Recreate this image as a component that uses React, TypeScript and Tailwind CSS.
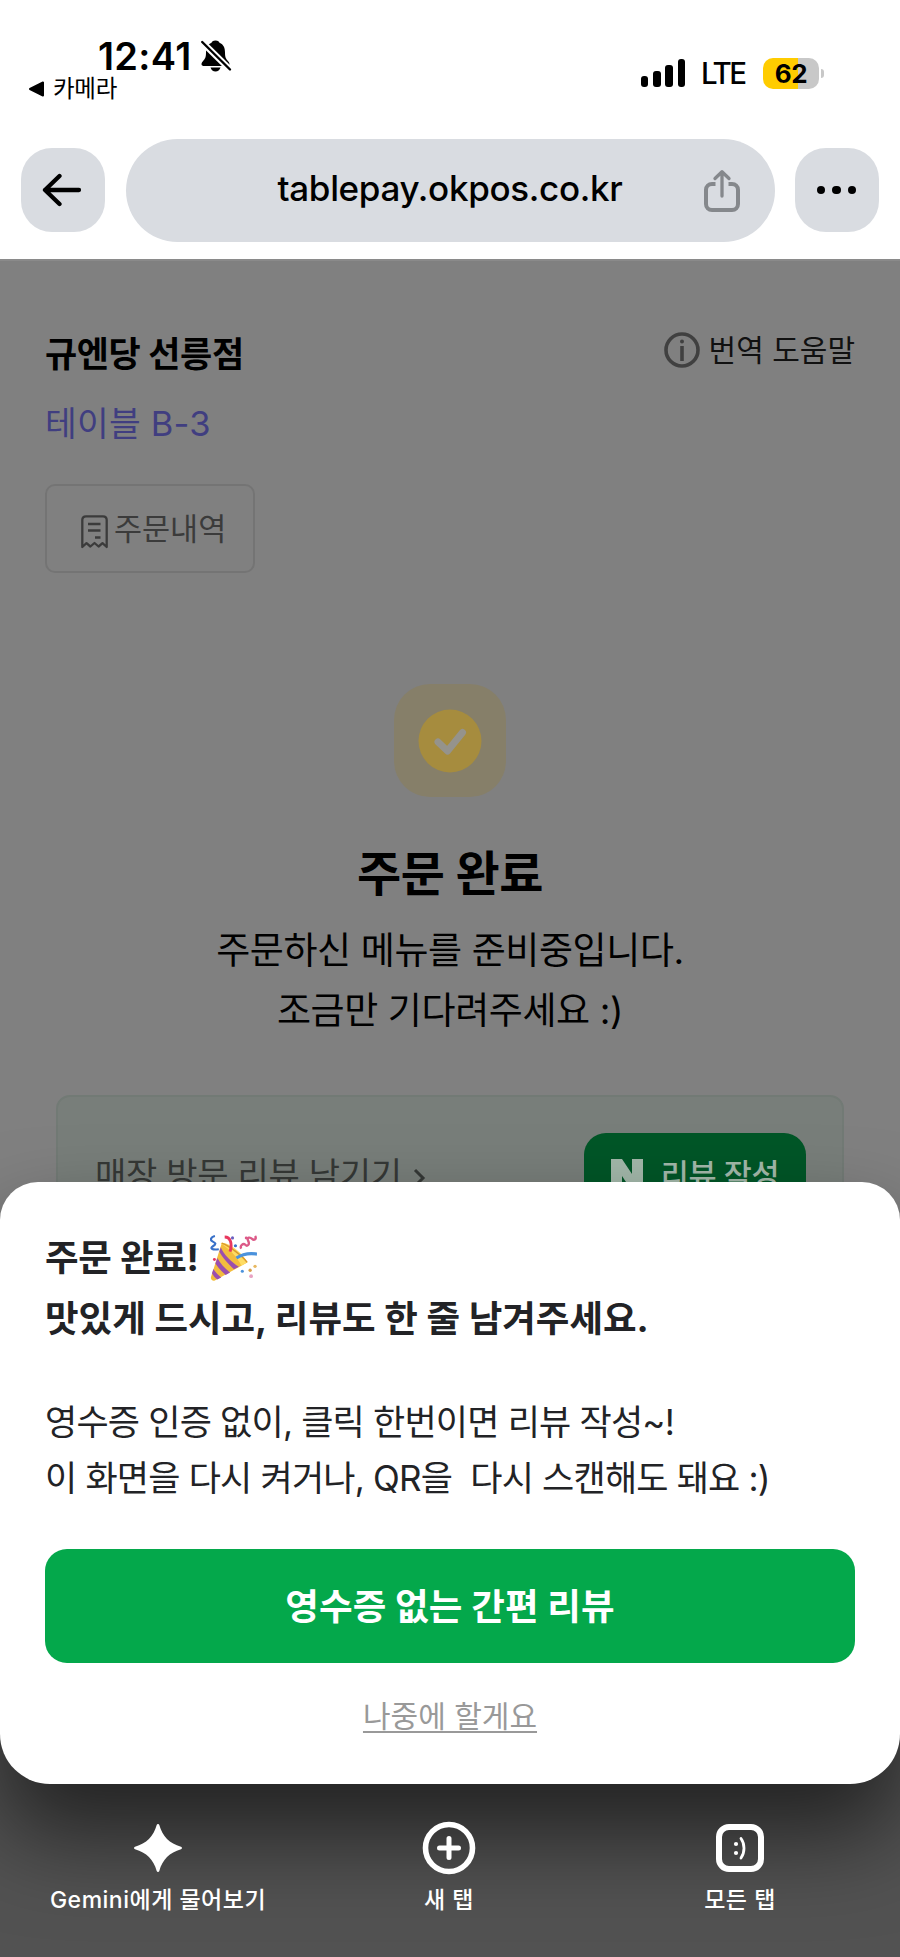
import type { ReactNode } from 'react';

function MutedBell() {
  return (
    <svg width="32" height="34" viewBox="0 0 32 34">
      <path d="M15.500 1.500c-2.700 0-3.600 1.200-4 2.300C7.400 5.500 6 9 6 13.500c0 5-1 6.500-3.300 9C.7 24.800 1.300 27 4 27h23c2.700 0 3.300-2.200 1.300-4.500C26 20 25 18.500 25 13.500c0-4.500-1.400-8-5.500-9.700-.4-1.100-1.300-2.300-4-2.300z" />
      <path d="M10.500 28.500h10c-.8 2.600-2.600 3.900-5 3.900s-4.200-1.300-5-3.900z" />
      <path d="M2.500 3.500L30 30.500" stroke="#fff" strokeWidth="6.500" />
      <path d="M2.200 3L30 30.500" stroke="#000" strokeWidth="2.400" strokeLinecap="round" />
    </svg>
  );
}

function StatusBar() {
  return (
    <div className="h-[139px] flex justify-between items-start">
      <div className="pt-[33px]">
        <div className="flex items-center pl-[98px] h-[46px]">
          <span className="text-[38px] leading-[46px] font-semibold tracking-[0.300px]">12:41</span>
          <span className="ml-[8px]">
            <MutedBell />
          </span>
        </div>
        <div className="flex items-center pl-[28px] h-[20px]">
          <svg width="17" height="16" viewBox="0 0 17 16">
            <path d="M2 8L15 1.500v13z" stroke="#000" strokeWidth="2" strokeLinejoin="round" />
          </svg>
          <span className="ml-[8px] text-[23.500px] leading-[24px] tracking-[-0.3px]">카메라</span>
        </div>
      </div>
      <div className="flex items-center pt-[57px] pr-[76px]">
        <div className="flex items-end gap-[4.700px] h-[28px] pt-px">
          <span className="w-[7.500px] h-[11px] rounded-[3px] bg-black" />
          <span className="w-[7.500px] h-[16px] rounded-[3px] bg-black" />
          <span className="w-[7.500px] h-[22px] rounded-[3px] bg-black" />
          <span className="w-[7.500px] h-[28px] rounded-[3px] bg-black" />
        </div>
        <span className="ml-[16px] w-[62px] text-[29.500px] leading-[32px] font-medium tracking-[-2.400px]">LTE</span>
        <div className="w-[56px] h-[31px] rounded-[10px] bg-[linear-gradient(90deg,#fc0_63%,#c8c8c8_63%)] flex items-center justify-center">
          <span className="text-[26px] leading-[31px] font-bold tracking-[-0.3px]">62</span>
        </div>
        <span className="ml-[2px] w-[3px] h-[9px] rounded-r-full bg-[#c8c8c8]" />
      </div>
    </div>
  );
}

function AddressBar() {
  return (
    <div className="h-[120px] flex items-start justify-between px-[21px]">
      <button className="mt-[9px] w-[84px] h-[84px] rounded-[31px] bg-[#d9dce1] flex items-center justify-center pr-[2px]">
        <svg width="40" height="34" viewBox="0 0 40 34" fill="none" stroke="#000" strokeWidth="4.300" strokeLinecap="round" strokeLinejoin="round">
          <path d="M37 17H3M17.500 3L3 17l14.500 14" />
        </svg>
      </button>
      <div className="w-[649px] h-[103px] rounded-full bg-[#d9dce1] flex items-center justify-end pr-[34px]">
        <span className="text-[35px] leading-[44px] pb-[6px] mr-[80px] font-medium tracking-[-0.330px]">tablepay.okpos.co.kr</span>
        <svg width="38" height="44" viewBox="0 0 38 44" fill="none" stroke="#85888c" strokeWidth="4" strokeLinecap="round" strokeLinejoin="round">
          <path d="M12.500 15H9c-3.500 0-6 2.300-6 5.800V35c0 3.600 2.500 6 6 6h20c3.500 0 6-2.400 6-6V20.800c0-3.500-2.500-5.800-6-5.800h-3.500" strokeLinecap="butt" />
          <path d="M19 27V3M12 9.500L19 2.700l7 6.800" strokeWidth="3.300" />
        </svg>
      </div>
      <button className="mt-[9px] w-[84px] h-[84px] rounded-[31px] bg-[#d9dce1] flex items-center justify-center gap-[7px] pr-px">
        <span className="w-[8.500px] h-[8.500px] rounded-full bg-black" />
        <span className="w-[8.500px] h-[8.500px] rounded-full bg-black" />
        <span className="w-[8.500px] h-[8.500px] rounded-full bg-black" />
      </button>
    </div>
  );
}

function ReceiptIcon() {
  return (
    <svg width="27" height="34" viewBox="0 0 27 34" fill="none" stroke="#3b3b3b" strokeWidth="2.300">
      <path d="M1.300 32V5c0-2.400 1.300-3.700 3.700-3.700h17c2.400 0 3.700 1.300 3.700 3.700v27l-4.200-3.800-3.900 3.300-4.100-3.500-4.100 3.500-3.900-3.300z" strokeLinejoin="round" />
      <path d="M7 9h12.500M7 15.500h12.500M14 22.500h5.500" />
    </svg>
  );
}

function OrderPage() {
  return (
    <main className="h-[1341px] bg-[#808080] border-t-2 border-[#8a8a8a] px-[45px]">
      <div className="flex justify-between pt-[67px]">
        <div>
          <h1 className="text-[35px] leading-[52px] font-bold tracking-[-0.400px]">규엔당 선릉점</h1>
          <p className="mt-[18px] text-[34.500px] leading-[52px] tracking-[0.200px] text-[#403e80]">테이블 B-3</p>
        </div>
        <div className="flex items-center h-[44px] text-[#111]">
          <svg className="mb-px" width="36" height="36" viewBox="0 0 36 36" fill="none" stroke="#404040" strokeWidth="3.600">
            <circle cx="18" cy="18" r="16" />
            <path d="M18 14v15" />
            <circle cx="18" cy="9.500" r="2" fill="#404040" stroke="none" />
          </svg>
          <span className="ml-[9px] text-[30px] leading-[44px]">번역 도움말</span>
        </div>
      </div>
      <button className="mt-[34px] w-[210px] h-[89px] rounded-[10px] border-2 border-[#747474] flex items-center pl-[34px] text-[#3b3b3b]">
        <span className="mt-[6px]">
          <ReceiptIcon />
        </span>
        <span className="ml-[6px] pt-px text-[30.500px] leading-[44px]">주문내역</span>
      </button>

      <section className="flex flex-col items-center text-center pt-[111px]">
        <div className="w-[112px] h-[113px] rounded-[36px] bg-[#867f69] flex items-center justify-center">
          <svg width="64" height="64" viewBox="0 0 64 64" fill="none">
            <circle cx="32" cy="32" r="31.500" fill="#a68c3e" />
            <path d="M20 33l9.500 9L44.500 23.500" stroke="#95938c" strokeWidth="7" strokeLinecap="round" strokeLinejoin="round" />
          </svg>
        </div>
        <h2 className="mt-[41px] text-[48px] leading-[72px] font-bold tracking-[-0.400px]">주문 완료</h2>
        <p className="mt-[11px] text-[37px] leading-[60px] tracking-[-0.400px]">
          주문하신 메뉴를 준비중입니다.
          <br />
          조금만 기다려주세요 :)
        </p>
      </section>

      <section className="mt-[54px] mx-[11px] h-[160px] rounded-[14px] border-2 border-[#727a75] bg-[#787e7a] flex items-center justify-between pl-[37px] pr-[36px]">
        <div className="flex items-center text-[#353836]">
          <span className="text-[34px] leading-[48px] tracking-[-0.300px]">매장 방문 리뷰 남기기</span>
          <svg className="ml-[11px] mt-[6px]" width="13" height="20" viewBox="0 0 13 20" fill="none" stroke="#353836" strokeWidth="3">
            <path d="M2 2l8 8-8 8" />
          </svg>
        </div>
        <button className="w-[222px] h-[84px] rounded-[22px] bg-[#005627] flex items-center justify-center text-[#a3b8aa]">
          <svg width="32" height="32" viewBox="0 0 32 32" fill="#a3b8aa">
            <path d="M0 0h11l10 15V0h11v32H21L11 17v15H0z" />
          </svg>
          <span className="ml-[18px] text-[30.500px] leading-[44px] font-medium tracking-[-0.400px]">리뷰 작성</span>
        </button>
      </section>
    </main>
  );
}

function PartyPopper() {
  return (
    <svg width="47" height="47" viewBox="0 0 48 48" fill="none">
      <path d="M12 8.500C20 10 35 22 38 28L5 46.500c-2.500 1-4.500-1-4-3.500z" fill="#f3bd3d" />
      <path d="M11 9c7 3 18 15 21 22.500l6-3.300C35 20 20 7.500 12 8z" fill="#ffdc63" />
      <path d="M9.500 17c3 5.500 9 12 15 18l5-2.700C22 28 14 20 11 12.500zM5.500 29c3 4.500 6.500 8.500 10.500 11.800l4.500-2.500C15 34 10.500 29 7.500 23.500zM2 39c1.300 2.500 3.300 5 5.500 6.500l4-2.200c-3-2.300-6-5.300-8-8.500z" fill="#9b4fae" />
      <path d="M12 8.500C18 10 33 21 38 28" stroke="#d99a2c" strokeWidth="1.500" />
      <path d="M15 2c6 0 8 7 5.500 15" stroke="#e8385e" strokeWidth="3" />
      <path d="M5 1C1 2-.5 5 2.500 6.500S7 9 3 11.500s0 4 6 3" stroke="#3971c9" strokeWidth="2.200" />
      <path d="M32 14c-2-3 2-6 4-4s5 0 3-4 2-4 4-2 5 0 3-3" stroke="#dc5a88" strokeWidth="2.400" />
      <path d="M27 23.500c6-4 12-5.500 21-4" stroke="#4b92dc" strokeWidth="3.300" />
      <circle cx="23" cy="3" r="1.600" fill="#6a5fc0" />
      <circle cx="26" cy="11" r="1.600" fill="#3971c9" />
      <circle cx="37" cy="3" r="1.500" fill="#dc5a88" />
      <circle cx="4.500" cy="25" r="1.500" fill="#e8385e" />
      <circle cx="33" cy="37" r="1.600" fill="#4b92dc" />
      <circle cx="41" cy="36" r="1.700" fill="#d8a04a" />
      <circle cx="46" cy="32" r="1.700" fill="#e8b860" />
      <circle cx="42" cy="42" r="1.900" fill="#e8a2c2" />
    </svg>
  );
}

function ReviewSheet() {
  return (
    <div className="absolute inset-x-0 top-[1182px] h-[602px] rounded-t-[38px] rounded-b-[50px] bg-white px-[45px] pt-[46px] text-[#222326] shadow-[0_50px_90px_rgba(0,0,0,0.58)]">
      <div className="text-[36.500px] leading-[61px] font-bold">
        <div className="flex items-center tracking-[-0.300px]">
          주문 완료!
          <span className="ml-[11px]">
            <PartyPopper />
          </span>
        </div>
        <div>맛있게 드시고, 리뷰도 한 줄 남겨주세요.</div>
      </div>
      <p className="mt-[44px] text-[35px] leading-[56px] tracking-[-0.800px] whitespace-pre">
        {'영수증 인증 없이, 클릭 한번이면 리뷰 작성~!\n이 화면을 다시 켜거나, QR을  다시 스캔해도 돼요 :)'}
      </p>
      <button className="mt-[43px] w-full h-[114px] rounded-[22px] bg-[#04a84b] text-white text-[36.500px] font-bold tracking-[0.100px] flex items-center justify-center pt-[2px]">
        영수증 없는 간편 리뷰
      </button>
      <div className="mt-[31px] flex justify-center">
        <button className="text-[30px] leading-[44px] text-[#999] underline underline-offset-[4px] decoration-2 [text-decoration-skip-ink:none]">
          나중에 할게요
        </button>
      </div>
    </div>
  );
}

function Tab({ label, children }: { label: string; children: ReactNode }) {
  return (
    <button className="w-[291px] flex flex-col items-center">
      <span className="h-[54px] flex items-center">{children}</span>
      <span className="mt-[9px] text-[23px] leading-[32px] font-medium tracking-[0.500px]">{label}</span>
    </button>
  );
}

// The tabs stay above the sheet's shadow, the bar's background below it
function BottomBar() {
  return (
    <nav className="flex-1 bg-[#525252] text-white pt-[221px]">
      <div className="relative z-10 flex justify-center items-start pr-[2px]">
        <Tab label="Gemini에게 물어보기">
          <svg width="50" height="50" viewBox="0 0 50 50" fill="#fff">
            <path d="M25 1c.7 0 1.100.4 1.300 1C29.500 13.500 36.500 20.500 48 23.700c1.300.5 1.300 2.100 0 2.600C36.500 29.500 29.500 36.500 26.300 48c-.5 1.300-2.100 1.300-2.600 0C20.500 36.500 13.500 29.500 2 26.300c-1.300-.5-1.300-2.100 0-2.600C13.500 20.500 20.500 13.500 23.700 2c.2-.6.6-1 1.300-1z" />
          </svg>
        </Tab>
        <Tab label="새 탭">
          <svg width="54" height="54" viewBox="0 0 54 54" fill="none" stroke="#fff" strokeLinecap="round">
            <circle cx="27" cy="27" r="23.500" strokeWidth="5.600" />
            <path d="M27 17.500v19M17.500 27h19" strokeWidth="5" />
          </svg>
        </Tab>
        <Tab label="모든 탭">
          <span className="w-[48px] h-[48px] rounded-[13px] border-[6px] border-white flex items-center justify-center">
            <svg width="14" height="24" viewBox="0 0 14 24">
              <circle cx="3" cy="8" r="2.100" fill="#fff" />
              <circle cx="3" cy="17" r="2.100" fill="#fff" />
              <path d="M8 2.500c4 5.500 4 14 0 19.500" fill="none" stroke="#fff" strokeWidth="2.800" strokeLinecap="round" />
            </svg>
          </span>
        </Tab>
      </div>
    </nav>
  );
}

export default function App() {
  return (
    <div className="relative w-[900px] h-[1957px] overflow-hidden flex flex-col bg-white text-black font-['Inter','Noto_Sans_CJK_KR',sans-serif]">
      <header className="h-[259px] shrink-0">
        <StatusBar />
        <AddressBar />
      </header>
      <OrderPage />
      <BottomBar />
      <ReviewSheet />
    </div>
  );
}
